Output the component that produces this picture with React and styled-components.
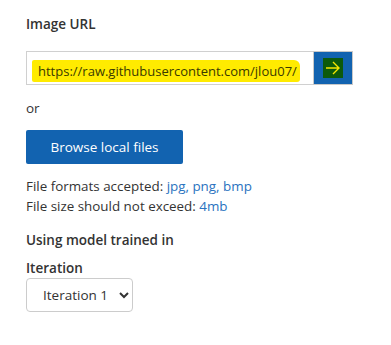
import { createGlobalStyle, styled } from "styled-components";

const GlobalStyle = createGlobalStyle`
  body {
    margin: 0;
    background: #fff;
    font-family: "Open Sans", "Noto Sans", sans-serif;
    color: #333;
  }
`

const Panel = styled.div`
  padding: 14px 26px 0;
  width: 391px;
  height: 345px;
  box-sizing: border-box;
`
const Label = styled.div`
  font-size: 13.5px;
  font-weight: 600;
  color: #333;
  line-height: 20px;
  margin: ${(p) => p.$margin || "0"};
`
const UrlRow = styled.div`
  display: flex;
  width: 327px;
  height: 34px;
  margin-top: 17px;
`
const UrlField = styled.div`
  flex: 1;
  border: 1px solid #d0d0d0;
  border-right: none;
  display: flex;
  align-items: center;
  padding-left: 5px;
  overflow: hidden;
`
const Marker = styled.span`
  margin-top: 5px;
  background: #ffeb00;
  font-size: 13px;
  color: #3a3a00;
  padding: 1px 3px 1px 6px;
  border-radius: 2px 6px 3px 2px;
  white-space: nowrap;
  line-height: 20px;
`
const GoButton = styled.button`
  width: 40px;
  border: 1px solid #c8c8c8;
  background: #1263b0;
  display: flex;
  align-items: center;
  justify-content: center;
  padding: 0;
`
const GoIcon = styled.span`
  width: 20px;
  height: 20px;
  background: #0d5a0c;
  display: flex;
  align-items: center;
  justify-content: center;
`
const Or = styled.div`
  font-size: 13.5px;
  margin-top: 13px;
  line-height: 20px;
`
const BrowseButton = styled.button`
  margin-top: 12px;
  width: 157px;
  height: 34px;
  border: none;
  border-radius: 2px;
  background: #1263b0;
  color: #fff;
  font-family: inherit;
  font-size: 13.5px;
`
const Info = styled.div`
  margin-top: 12px;
  font-size: 13.4px;
  line-height: 20px;
`
const Accent = styled.span`
  color: #2a73c0;
`
const Select = styled.select`
  display: block;
  width: 107px;
  height: 34px;
  border: 1px solid #ccc;
  border-radius: 4px;
  background: #fff;
  font-family: inherit;
  font-size: 13.5px;
  color: #333;
  padding-left: 12px;
`

function App() {
  return (
    <>
      <GlobalStyle />
      <Panel>
        <Label>Image URL</Label>
        <UrlRow>
          <UrlField>
            <Marker>https://raw.githubusercontent.com/jlou07/</Marker>
          </UrlField>
          <GoButton aria-label="Submit URL">
            <GoIcon>
              <svg width="16" height="14" viewBox="0 0 16 14" fill="none" stroke="#f5e600" strokeWidth="1.4">
                <path d="M1 7h13M8 1l6 6-6 6" />
              </svg>
            </GoIcon>
          </GoButton>
        </UrlRow>
        <Or>or</Or>
        <BrowseButton>Browse local files</BrowseButton>
        <Info>
          File formats accepted: <Accent>jpg, png, bmp</Accent>
          <br />
          File size should not exceed: <Accent>4mb</Accent>
        </Info>
        <Label $margin="14px 0 0">Using model trained in</Label>
        <Label $margin="8px 0 0">Iteration</Label>
        <Select defaultValue="1">
          <option value="1">Iteration 1</option>
        </Select>
      </Panel>
    </>
  );
}

export default App;
